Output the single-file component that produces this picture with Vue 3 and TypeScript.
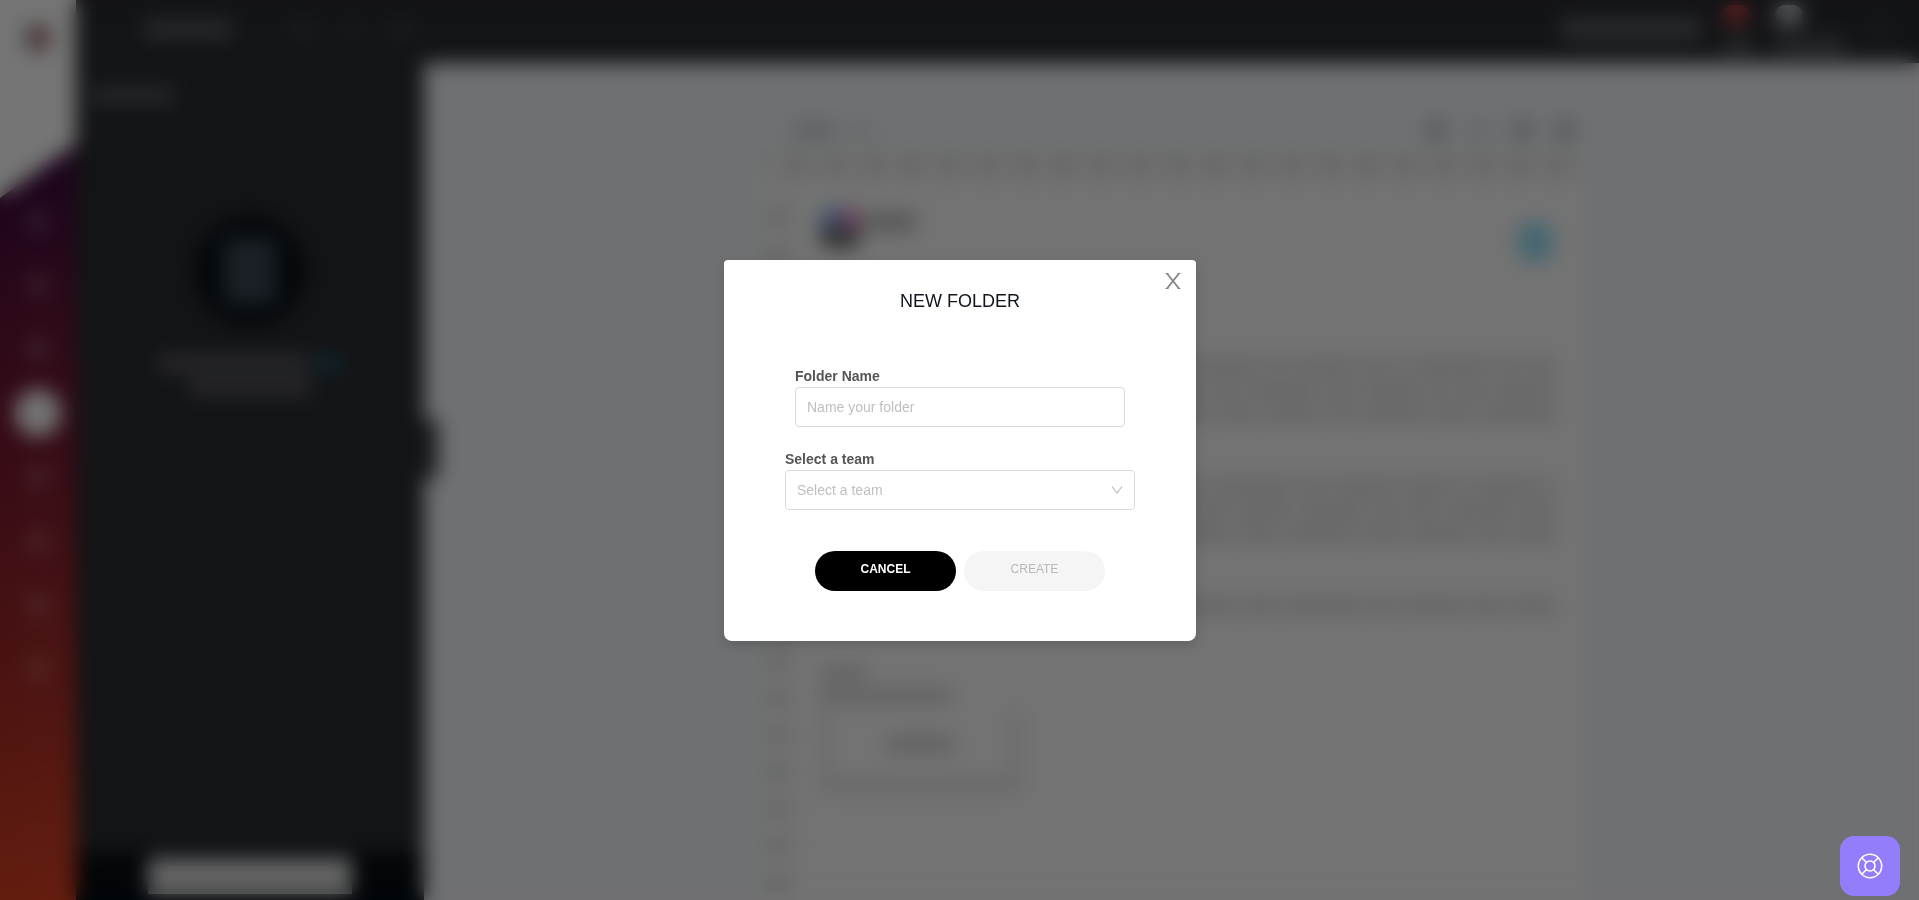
<script setup lang="ts">
import { ref } from 'vue'

const folderName = ref('')
const team = ref('')

const railItems = ['home', 'board', 'send', 'documents', 'people', 'stats', 'files', 'settings']
const rulerColumns = 21
const rulerRows = 19

// Relative word lengths of the skeleton document, one array for each line
const paragraphs: number[][][] = [
  [
    [60, 90, 40, 110, 50, 75, 24, 60, 30, 12, 80, 24, 30],
    [80, 50, 100, 70, 60, 30, 70, 30, 60, 24, 30, 60],
    [90, 60, 80, 110, 50, 40, 60, 30, 70, 40, 80],
  ],
  [
    [70, 100, 60, 80, 50, 80, 30, 60, 50, 12, 60, 12],
    [100, 60, 80, 70, 30, 50, 60, 24, 30, 60, 30],
    [60, 90, 80, 100, 50, 40, 70, 40, 60, 30, 40],
  ],
  [[80, 60, 100, 70, 50, 80, 40, 90, 30, 70, 40, 50]],
]
</script>

<template>
  <div class="screen">
    <div class="workspace" aria-hidden="true">
      <nav class="rail">
        <div class="rail-top"><span class="logo"></span></div>
        <div class="rail-items">
          <span v-for="item in railItems" :key="item" class="rail-item" :class="{ active: item === 'documents' }"></span>
        </div>
      </nav>
      <div class="main">
        <header class="topbar">
          <span class="brand"></span>
          <span class="crumb"></span>
          <span class="crumb faint"></span>
          <span class="crumb"></span>
          <span class="spacer"></span>
          <span class="top-action"></span>
          <span class="top-stack"><i class="alert"></i><i class="caption"></i></span>
          <span class="top-stack wide"><i class="avatar"></i><i class="caption"></i></span>
          <span class="crumb faint"></span>
        </header>
        <div class="body">
          <aside class="panel">
            <div class="panel-title"></div>
            <div class="empty-art"><span></span></div>
            <div class="empty-line"><i></i><i class="link"></i></div>
            <div class="empty-line second"><i></i></div>
            <div class="panel-foot"><span></span></div>
            <div class="handle"></div>
          </aside>
          <section class="canvas">
            <div class="sheet">
              <div class="sheet-tools">
                <i class="page-name"></i><i class="page-no"></i><span class="spacer"></span>
                <i v-for="n in 4" :key="n" class="tool" :class="{ dim: n === 2 }"></i>
              </div>
              <div class="ruler-x"><i v-for="n in rulerColumns" :key="n"></i></div>
              <div class="sheet-row">
                <div class="ruler-y"><i v-for="n in rulerRows" :key="n"></i></div>
                <div class="page">
                  <div class="letterhead">
                    <span class="mark"></span><span class="company"></span>
                    <span class="spacer"></span><span class="drop"></span>
                  </div>
                  <div v-for="(lines, p) in paragraphs" :key="p" class="paragraph">
                    <div v-for="(words, l) in lines" :key="l" class="line">
                      <i v-for="(w, k) in words" :key="k" :style="{ flexGrow: w }"></i>
                    </div>
                  </div>
                  <div class="closing short"></div>
                  <div class="closing"></div>
                  <div class="signature"><i></i></div>
                </div>
              </div>
            </div>
          </section>
        </div>
      </div>
    </div>

    <div class="overlay">
      <form class="dialog" role="dialog" aria-modal="true" aria-labelledby="dialog-title" @submit.prevent>
        <button type="button" class="close" aria-label="Close">
          <svg viewBox="0 0 16 16" width="16" height="16" fill="none" stroke="#858585">
            <path d="M2 .5 14 15.500M14 .5 2 15.500" stroke-width="1.800" />
            <path d="M.5 .5h3M12.500 .5h3M.5 15.500h3M12.500 15.500h3" />
          </svg>
        </button>
        <h1 id="dialog-title">NEW FOLDER</h1>
        <div class="field">
          <label for="folder-name">Folder Name</label>
          <input id="folder-name" v-model="folderName" type="text" placeholder="Name your folder" />
        </div>
        <div class="field team">
          <label for="team">Select a team</label>
          <div class="select">
            <select id="team" v-model="team">
              <option value="" disabled>Select a team</option>
            </select>
            <svg viewBox="0 0 12 10" width="12" height="10" fill="none" stroke="#bdbdbd" stroke-width="1.200">
              <path d="M1 1.500 6 8l5-6.500" />
            </svg>
          </div>
        </div>
        <div class="actions">
          <button type="button" class="cancel">CANCEL</button>
          <button type="submit" class="create" disabled>CREATE</button>
        </div>
      </form>
    </div>

    <button type="button" class="help" aria-label="Help">
      <svg viewBox="0 0 26 26" width="26" height="26" fill="none" stroke="#fff" stroke-width="1.600">
        <circle cx="13" cy="13" r="11.700" />
        <circle cx="13" cy="13" r="5" />
        <path d="M4.800 4.800 9.500 9.500M21.200 4.800 16.500 9.500M4.800 21.200l4.700-4.700M21.200 21.200l-4.700-4.700" />
      </svg>
    </button>
  </div>
</template>

<style>
body {
  margin: 0;
  overflow: hidden;
}
</style>

<style scoped>
* {
  box-sizing: border-box;
}
.screen {
  position: relative;
  height: 100vh;
  overflow: hidden;
  font-family: "Liberation Sans", Arial, sans-serif;
}
.workspace {
  display: flex;
  height: 100%;
  overflow: hidden;
  background: #6f7072;
}
.spacer {
  flex: 1;
}

/* Left rail */
.rail {
  flex: none;
  width: 76px;
  background: linear-gradient(170deg, #1d041c 20%, #2c0919 35%, #3b0d15 55%, #4c1412 75%, #651e0f 100%);
}
.rail-top {
  height: 198px;
  padding: 24px;
  background: #757575;
  clip-path: polygon(0 0, 100% 0, 100% 144px, 0 100%);
}
.logo {
  display: block;
  width: 28px;
  height: 28px;
  border-radius: 50%;
  background: linear-gradient(90deg, #3f3a3c, #573a3a);
}
.rail-items {
  display: flex;
  flex-direction: column;
  align-items: center;
}
.rail-item {
  display: flex;
  align-items: center;
  justify-content: center;
  width: 46px;
  height: 46px;
  margin-bottom: 18px;
}
.rail-item::before {
  content: "";
  width: 22px;
  height: 22px;
  border-radius: 6px;
  background: rgba(120, 120, 120, 0.18);
}
.rail-item.active::before {
  width: 48px;
  height: 48px;
  border-radius: 50%;
  background: #737373;
}

/* Top bar */
.main {
  flex: 1;
  min-width: 0;
  display: flex;
  flex-direction: column;
}
.topbar {
  flex: none;
  display: flex;
  align-items: center;
  height: 63px;
  padding: 0 10px 6px 68px;
  background: #131416;
}
.brand {
  width: 88px;
  height: 18px;
  margin-right: 60px;
  background: #292a2b;
}
.crumb {
  width: 20px;
  height: 16px;
  margin-right: 30px;
  background: #1c1d1f;
}
.crumb.faint {
  background: #18191b;
}
.topbar .crumb:last-child {
  margin-right: 20px;
}
.top-action {
  width: 140px;
  height: 24px;
  margin-right: 22px;
  background: #28292a;
}
.top-stack {
  display: flex;
  flex-direction: column;
  gap: 14px;
  width: 30px;
  margin-right: 22px;
}
.top-stack.wide {
  width: 70px;
  margin-right: 24px;
}
.top-stack i {
  height: 20px;
}
.alert {
  width: 26px;
  border-radius: 10px;
  background: #5c2020;
}
.avatar {
  width: 28px;
  border-radius: 10px;
  background: #606162;
}
.top-stack .caption {
  height: 14px;
  background: #2b2c2d;
}

/* Side panel */
.body {
  flex: 1;
  min-height: 0;
  display: flex;
}
.panel {
  position: relative;
  flex: none;
  display: flex;
  flex-direction: column;
  align-items: center;
  width: 348px;
  background: #131416;
}
.panel-title {
  align-self: flex-start;
  width: 82px;
  height: 17px;
  margin: 24px 0 0 16px;
  background: #272829;
}
.empty-art {
  display: grid;
  place-items: center;
  width: 112px;
  height: 112px;
  margin-top: 111px;
  border-radius: 50%;
  background: #04080b;
}
.empty-art span {
  width: 52px;
  height: 66px;
  background: #1b2026;
}
.empty-line {
  display: flex;
  gap: 6px;
  margin-top: 28px;
}
.empty-line i {
  width: 150px;
  height: 16px;
  background: #2a2a2b;
}
.empty-line .link {
  width: 28px;
  background: #10262f;
}
.empty-line.second {
  margin-top: 8px;
}
.empty-line.second i {
  width: 122px;
}
.panel-foot {
  display: flex;
  justify-content: center;
  align-items: center;
  width: 100%;
  height: 48px;
  margin-top: auto;
  background: #020609;
}
.panel-foot span {
  width: 204px;
  height: 36px;
  background: #656565;
}
.handle {
  position: absolute;
  left: 100%;
  top: 357px;
  width: 14px;
  height: 58px;
  background: #1b1c1e;
}

/* Document */
.canvas {
  flex: 1;
  min-width: 0;
  display: flex;
  justify-content: center;
  padding-top: 53px;
}
.sheet {
  display: flex;
  flex-direction: column;
  width: 826px;
}
.sheet-tools {
  display: flex;
  align-items: center;
  height: 32px;
  padding: 0 10px 4px 34px;
}
.page-name {
  width: 42px;
  height: 15px;
  margin-right: 12px;
  background: #5e5f61;
}
.page-no {
  width: 26px;
  height: 13px;
  background: #676868;
}
.tool {
  width: 20px;
  height: 22px;
  margin-left: 23px;
  border-radius: 5px;
  background: #5a5b5c;
}
.tool.dim {
  background: #666768;
}
.ruler-x {
  display: flex;
  justify-content: space-between;
  align-items: center;
  height: 32px;
  padding: 4px 18px 0 30px;
  background: #6e6f6e;
}
.ruler-x i {
  width: 17px;
  height: 18px;
  background: #646464;
}
.sheet-row {
  flex: 1;
  min-height: 0;
  display: flex;
}
.ruler-y {
  flex: none;
  display: flex;
  flex-direction: column;
  align-items: center;
  gap: 21px;
  width: 38px;
  padding-top: 29px;
  background: #717271;
}
.ruler-y i {
  flex: none;
  width: 26px;
  height: 16px;
  background: #656666;
}
.page {
  flex: 1;
  min-width: 0;
  padding: 28px 30px 0 23px;
  background: #737373;
}
.letterhead {
  display: flex;
  height: 146px;
}
.mark {
  width: 40px;
  height: 40px;
  border-radius: 8px;
  background: conic-gradient(#6a3e5c 25%, #303030 25% 75%, #38526b 75%);
}
.company {
  width: 52px;
  height: 20px;
  margin: 4px 0 0 4px;
  background: #575757;
}
.drop {
  width: 36px;
  height: 40px;
  margin: 14px 2px 0 0;
  border-radius: 16px;
  background: #446672;
}
.paragraph {
  margin-bottom: 48px;
}
.line {
  display: flex;
  gap: 6px;
  height: 24px;
  padding: 5px 0;
}
.line i {
  flex-basis: 0;
  background: #636363;
}
.closing {
  width: 132px;
  height: 14px;
  margin-bottom: 8px;
  background: #606060;
}
.closing.short {
  width: 46px;
  margin: 6px 0 9px;
}
.signature {
  display: grid;
  place-items: center;
  width: 200px;
  height: 82px;
  border: solid #696969;
  border-width: 0 10px 16px;
}
.signature i {
  width: 70px;
  height: 16px;
  background: #5f5f5f;
}

/* Dialog */
.overlay {
  position: absolute;
  inset: 0;
  display: grid;
  place-items: center;
  padding-left: 1px;
  backdrop-filter: blur(10px);
}
.dialog {
  position: relative;
  display: flex;
  flex-direction: column;
  align-items: center;
  width: 472px;
  padding: 29px 0 50px;
  border-radius: 4px 4px 8px 8px;
  background: #fff;
  box-shadow: 0 4px 12px rgba(0, 0, 0, 0.15);
}
.close {
  position: absolute;
  top: 8px;
  right: 10px;
  display: grid;
  place-items: center;
  width: 26px;
  height: 26px;
  padding: 0;
  border: 0;
  background: none;
}
h1 {
  margin: 0 0 52px;
  font-size: 18px;
  font-weight: 400;
  line-height: 24px;
  color: #10151b;
}
.field {
  width: 330px;
  margin-bottom: 21px;
}
.field.team {
  width: 350px;
  margin-bottom: 41px;
}
label {
  display: block;
  font-size: 14px;
  font-weight: 700;
  line-height: 22px;
  color: #555;
}
input,
select {
  display: block;
  width: 100%;
  height: 40px;
  padding: 0 11px;
  border: 1px solid #d9d9d9;
  border-radius: 4px;
  background: #fff;
  font: 14px "Liberation Sans", Arial, sans-serif;
  color: #bfbfbf;
  appearance: none;
}
input::placeholder {
  color: #bfbfbf;
}
.select {
  position: relative;
}
.select svg {
  position: absolute;
  right: 12px;
  top: 15px;
  pointer-events: none;
}
.actions {
  display: flex;
  gap: 8px;
}
.actions button {
  width: 141px;
  height: 40px;
  padding: 0 0 4px;
  border: 0;
  border-radius: 20px;
  font: 12px "Liberation Sans", Arial, sans-serif;
}
.actions .cancel {
  background: #000;
  color: #fff;
  font-weight: 700;
}
.actions .create {
  background: #f5f5f5;
  color: #b8b8b8;
}
.help {
  position: absolute;
  right: 19px;
  bottom: 4px;
  display: grid;
  place-items: center;
  width: 60px;
  height: 60px;
  padding: 0;
  border: 0;
  border-radius: 14px;
  background: #937dfa;
}
</style>
